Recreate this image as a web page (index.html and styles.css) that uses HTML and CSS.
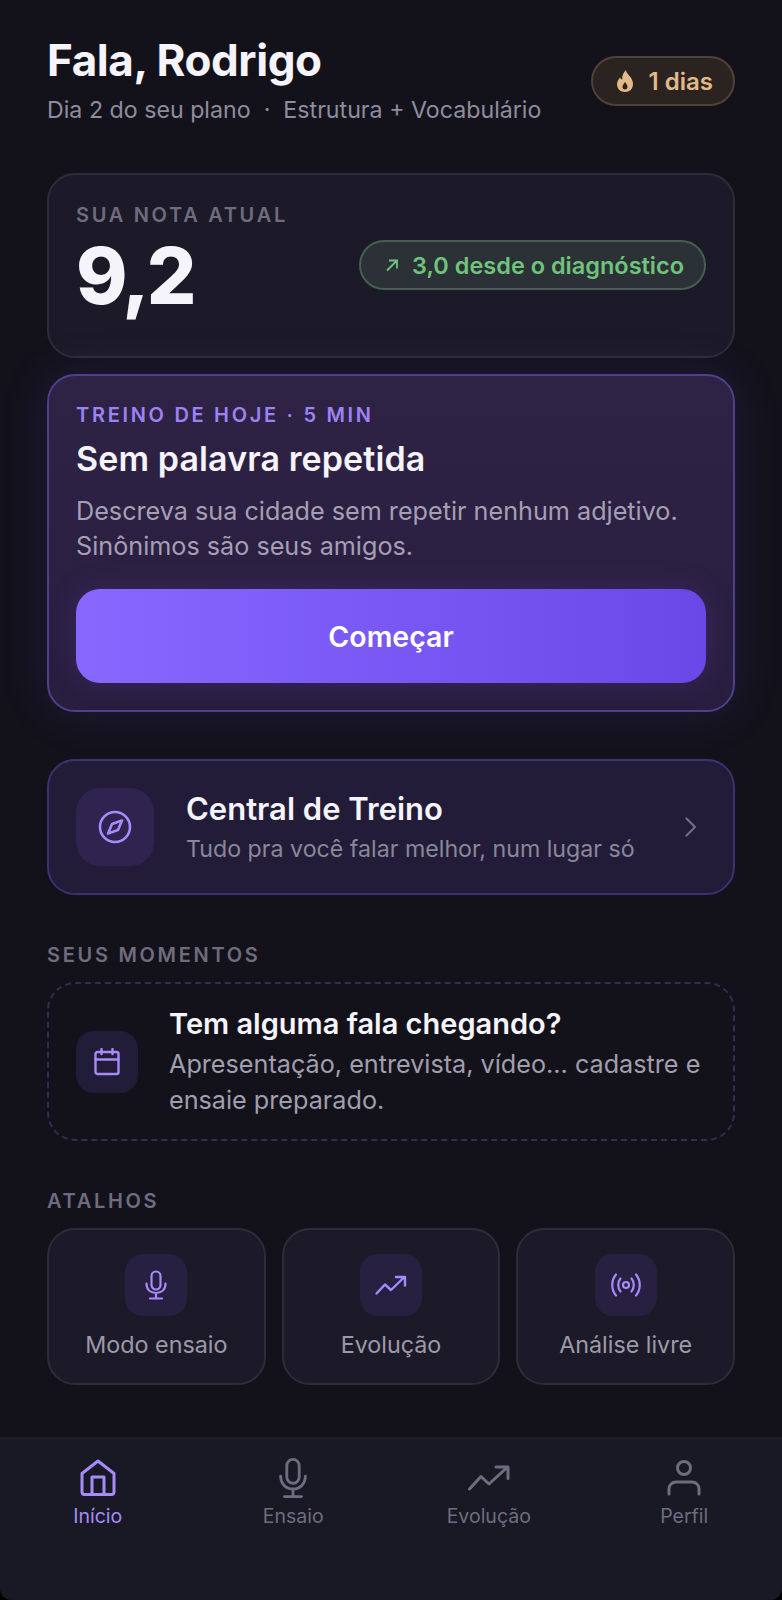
FILE: index.html
```html
<!DOCTYPE html>
<html lang="pt-BR">
<head>
    <meta charset="UTF-8">
    <meta name="viewport" content="width=device-width, initial-scale=1.0">
    <title>Início</title>
    <link rel="stylesheet" href="styles.css">
</head>
<body>
    <div class="app">
        <main class="content">
            <header class="top">
                <div>
                    <h1 class="greeting">Fala, Rodrigo</h1>
                    <p class="plan">Dia 2 do seu plano &nbsp;·&nbsp; Estrutura + Vocabulário</p>
                </div>
                <div class="streak">
                    <svg width="16" height="22" viewBox="0 0 16 22"><path fill="#e2b98a" fill-rule="evenodd" d="M9 0c0 4 7 7 7 14 0 5-3.500 8-8 8s-8-3-8-8c0-3 2-5 3-6.500.5 1.200 1.200 2 2.200 2C5 6 6 3 9 0zM8 12c-1.500 2-2.500 3.500-2.500 5 0 1.700 1.200 2.500 2.500 2.500s2.500-.8 2.500-2.500c0-1.500-1-3-2.500-5z"/></svg>
                    <span>1 dias</span>
                </div>
            </header>

            <section class="score-card">
                <div class="eyebrow">SUA NOTA ATUAL</div>
                <div class="score-row">
                    <div class="score">9,2</div>
                    <div class="delta">
                        <svg width="14" height="14" viewBox="0 0 14 14" fill="none" stroke="#6fc47a" stroke-width="1.800"><path d="M2 12.500 12 2.500M4 2.500h8v8"/></svg>
                        <span>3,0 desde o diagnóstico</span>
                    </div>
                </div>
            </section>

            <section class="today-card">
                <div class="eyebrow purple">TREINO DE HOJE · 5 MIN</div>
                <h2 class="today-title">Sem palavra repetida</h2>
                <p class="today-desc">Descreva sua cidade sem repetir nenhum adjetivo. Sinônimos são seus amigos.</p>
                <button class="start-btn">Começar</button>
            </section>

            <section class="central-card">
                <div class="icon-box big">
                    <svg width="34" height="34" viewBox="0 0 34 34" fill="none" stroke="#a78bfa" stroke-width="2.600" stroke-linejoin="round"><circle cx="17" cy="17" r="15"/><path d="M24 10.500l-4 9.500L10 23.500l4-9.500z"/></svg>
                </div>
                <div class="central-text">
                    <h3 class="central-title">Central de Treino</h3>
                    <p class="central-sub">Tudo pra você falar melhor, num lugar só</p>
                </div>
                <svg class="chevron" width="13" height="20" viewBox="0 0 13 20" fill="none" stroke="#6f6c80" stroke-width="2.200" stroke-linecap="round" stroke-linejoin="round"><path d="M2.500 1.500 11 10l-8.500 8.500"/></svg>
            </section>

            <div class="eyebrow section-label">SEUS MOMENTOS</div>
            <section class="moment-card">
                <div class="icon-box">
                    <svg width="26" height="28" viewBox="0 0 26 28" fill="none" stroke="#a78bfa" stroke-width="2.400" stroke-linejoin="round" stroke-linecap="round"><rect x="1.500" y="4" width="23" height="22" rx="2"/><path d="M1.500 11.500h23M7.500 1v5M18.500 1v5"/></svg>
                </div>
                <div>
                    <h3 class="moment-title">Tem alguma fala chegando?</h3>
                    <p class="moment-sub">Apresentação, entrevista, vídeo... cadastre e ensaie preparado.</p>
                </div>
            </section>

            <div class="eyebrow section-label">ATALHOS</div>
            <section class="shortcuts">
                <div class="shortcut">
                    <div class="icon-box">
                        <svg width="22" height="30" viewBox="0 0 22 30" fill="none" stroke="#a78bfa" stroke-width="2.200" stroke-linecap="round"><rect x="6.500" y="1.500" width="9" height="18" rx="4.500"/><path d="M1.500 13.500c0 6 4 9.500 9.500 9.500s9.500-3.500 9.500-9.500M11 23v5M5 28.500h12"/></svg>
                    </div>
                    <span>Modo ensaio</span>
                </div>
                <div class="shortcut">
                    <div class="icon-box">
                        <svg width="32" height="20" viewBox="0 0 32 20" fill="none" stroke="#a78bfa" stroke-width="2.400" stroke-linecap="round" stroke-linejoin="round"><path d="M1.500 18.500 10 9.500l6 5.500L29.500 2M21 2h9v8.500"/></svg>
                    </div>
                    <span>Evolução</span>
                </div>
                <div class="shortcut">
                    <div class="icon-box">
                        <svg width="30" height="24" viewBox="0 0 30 24" fill="none" stroke="#a78bfa" stroke-width="2.200" stroke-linecap="round"><circle cx="15" cy="12" r="3"/><path d="M9.500 5.500c-3 3.500-3 9.500 0 13M20.500 5.500c3 3.500 3 9.500 0 13M5 1.500c-5 6-5 15 0 21M25 1.500c5 6 5 15 0 21"/></svg>
                    </div>
                    <span>Análise livre</span>
                </div>
            </section>
        </main>

        <nav class="tabbar">
            <div class="tab active">
                <svg width="38" height="38" viewBox="0 0 38 38" fill="none" stroke="#a78bfa" stroke-width="3" stroke-linejoin="round"><path d="M19 2 35 14.500V33a2.500 2.500 0 0 1-2.500 2.500h-27A2.500 2.500 0 0 1 3 33V14.500z"/><path d="M13 35.500V18h12v17.500"/></svg>
                <span>Início</span>
            </div>
            <div class="tab">
                <svg width="30" height="42" viewBox="0 0 30 42" fill="none" stroke="#6f6c80" stroke-width="3" stroke-linecap="round"><rect x="8.500" y="1.500" width="13" height="25" rx="6.500"/><path d="M2 19c0 8 5.500 13.500 13 13.500S28 27 28 19M15 33v7M6 40.500h18"/></svg>
                <span>Ensaio</span>
            </div>
            <div class="tab">
                <svg width="42" height="26" viewBox="0 0 42 26" fill="none" stroke="#6f6c80" stroke-width="3" stroke-linecap="round" stroke-linejoin="round"><path d="M1.500 24 13 11.500l8 7.500L39 2.500M28 2h12v11.500"/></svg>
                <span>Evolução</span>
            </div>
            <div class="tab">
                <svg width="34" height="36" viewBox="0 0 34 36" fill="none" stroke="#6f6c80" stroke-width="3" stroke-linecap="round"><circle cx="17" cy="8" r="6.500"/><path d="M2 34v-5c0-4 3-7 7-7h16c4 0 7 3 7 7v5"/></svg>
                <span>Perfil</span>
            </div>
        </nav>
    </div>
</body>
</html>
```
FILE: styles.css
```css
* {
    box-sizing: border-box;
}

body {
    margin: 0;
    background-color: #000;
    font-family: Inter, "Noto Sans", sans-serif;
    color: #f5f4fa;
}

h1, h2, h3, p {
    margin: 0;
}

.app {
    width: 782px;
    height: 1600px;
    display: flex;
    flex-direction: column;
    background-color: #13121b;
    border-radius: 0 0 12px 12px;
    overflow: hidden;
}

.content {
    flex: 1;
    padding: 37px 47px 0;
}

.top {
    display: flex;
    justify-content: space-between;
    align-items: center;
    margin-bottom: 48px;
}

.greeting {
    font-size: 44px;
    font-weight: 700;
    line-height: 46px;
    letter-spacing: -0.400px;
}

.plan {
    margin-top: 12px;
    font-size: 23.200px;
    line-height: 30px;
    color: #8f8c9e;
}

.streak {
    display: flex;
    align-items: center;
    gap: 16px;
    height: 50px;
    padding: 0 20px 0 24px;
    background-color: #2a2320;
    border: 2px solid #4e4238;
    border-radius: 25px;
    font-size: 24px;
    font-weight: 600;
    color: #e2b98a;
}

.score-card {
    height: 185px;
    padding: 27px 27px 0;
    background-color: #1c1a28;
    border: 2px solid #2e2c39;
    border-radius: 28px;
}

.eyebrow {
    font-size: 20px;
    font-weight: 600;
    line-height: 26px;
    letter-spacing: 2.700px;
    color: #6f6c80;
}

.eyebrow.purple {
    color: #9d82f5;
}

.score-row {
    display: flex;
    justify-content: space-between;
    align-items: center;
    margin-top: 2px;
}

.score {
    padding-bottom: 4px;
    font-size: 78px;
    font-weight: 800;
    line-height: 92px;
    letter-spacing: -3px;
}

.delta {
    display: flex;
    align-items: center;
    gap: 13px;
    height: 50px;
    margin-top: -26px;
    padding: 0 20px 0 24px;
    background-color: #2b3136;
    border: 2px solid #46604f;
    border-radius: 25px;
    font-size: 23.500px;
    font-weight: 600;
    color: #6fc47a;
}

.today-card {
    height: 338px;
    margin-top: 16px;
    padding: 26px 27px 0;
    background: linear-gradient(180deg, #2f2345, #281e3e);
    border: 2px solid #50408c;
    border-radius: 28px;
    box-shadow: 0 0 48px rgba(108, 72, 232, 0.16);
}

.today-title {
    margin-top: 10px;
    font-size: 34px;
    font-weight: 600;
    line-height: 42px;
    letter-spacing: 0.100px;
}

.today-desc {
    margin-top: 14px;
    font-size: 25.200px;
    line-height: 35px;
    color: #a59fb6;
}

.start-btn {
    display: block;
    width: 100%;
    height: 94px;
    margin-top: 25px;
    background: linear-gradient(90deg, #8768ff, #6a48e8);
    border: none;
    border-radius: 24px;
    box-shadow: 0 0 30px rgba(108, 72, 232, 0.2);
    font-family: inherit;
    font-size: 28.500px;
    font-weight: 600;
    color: #fff;
}

.central-card {
    display: flex;
    align-items: center;
    height: 136px;
    margin-top: 47px;
    padding: 0 36px 0 27px;
    background-color: #221c38;
    border: 2px solid #3d3270;
    border-radius: 28px;
}

.icon-box {
    display: flex;
    justify-content: center;
    align-items: center;
    flex: none;
    width: 62px;
    height: 62px;
    background-color: #272041;
    border-radius: 18px;
}

.icon-box.big {
    width: 78px;
    height: 78px;
    background-color: #2f2450;
    border-radius: 24px;
}

.central-text {
    flex: 1;
    margin-left: 32px;
}

.central-title {
    font-size: 31px;
    font-weight: 600;
    line-height: 40px;
}

.central-sub {
    margin-top: 4px;
    font-size: 23.200px;
    line-height: 32px;
    color: #8a8799;
}

.section-label {
    margin-top: 47px;
    margin-bottom: 14px;
}

.moment-card {
    display: flex;
    align-items: center;
    gap: 31px;
    height: 159px;
    padding: 0 27px;
    border: 2px dashed #332d52;
    border-radius: 28px;
}

.moment-card .icon-box {
    background-color: #211c37;
}

.moment-title {
    font-size: 29px;
    font-weight: 600;
    line-height: 38px;
}

.moment-sub {
    margin-top: 3px;
    font-size: 25.200px;
    line-height: 36px;
    color: #a19eae;
}

.shortcuts {
    display: grid;
    grid-template-columns: repeat(3, 1fr);
    gap: 16px;
}

.shortcut {
    display: flex;
    flex-direction: column;
    align-items: center;
    height: 157px;
    padding-top: 24px;
    background-color: #1c1a28;
    border: 2px solid #2e2c39;
    border-radius: 28px;
    font-size: 23.300px;
    color: #9d9aa8;
}

.shortcut span {
    margin-top: 14px;
}

.tabbar {
    display: grid;
    grid-template-columns: repeat(4, 1fr);
    height: 163px;
    padding-top: 19px;
    background-color: #191825;
    border-top: 2px solid #1e1d2a;
}

.tab {
    display: flex;
    flex-direction: column;
    align-items: center;
    height: 70px;
    justify-content: space-between;
    font-size: 19.500px;
    line-height: 24px;
    color: #6f6c80;
}

.tab svg {
    height: 40px;
}

.tab.active {
    color: #a78bfa;
}
```
